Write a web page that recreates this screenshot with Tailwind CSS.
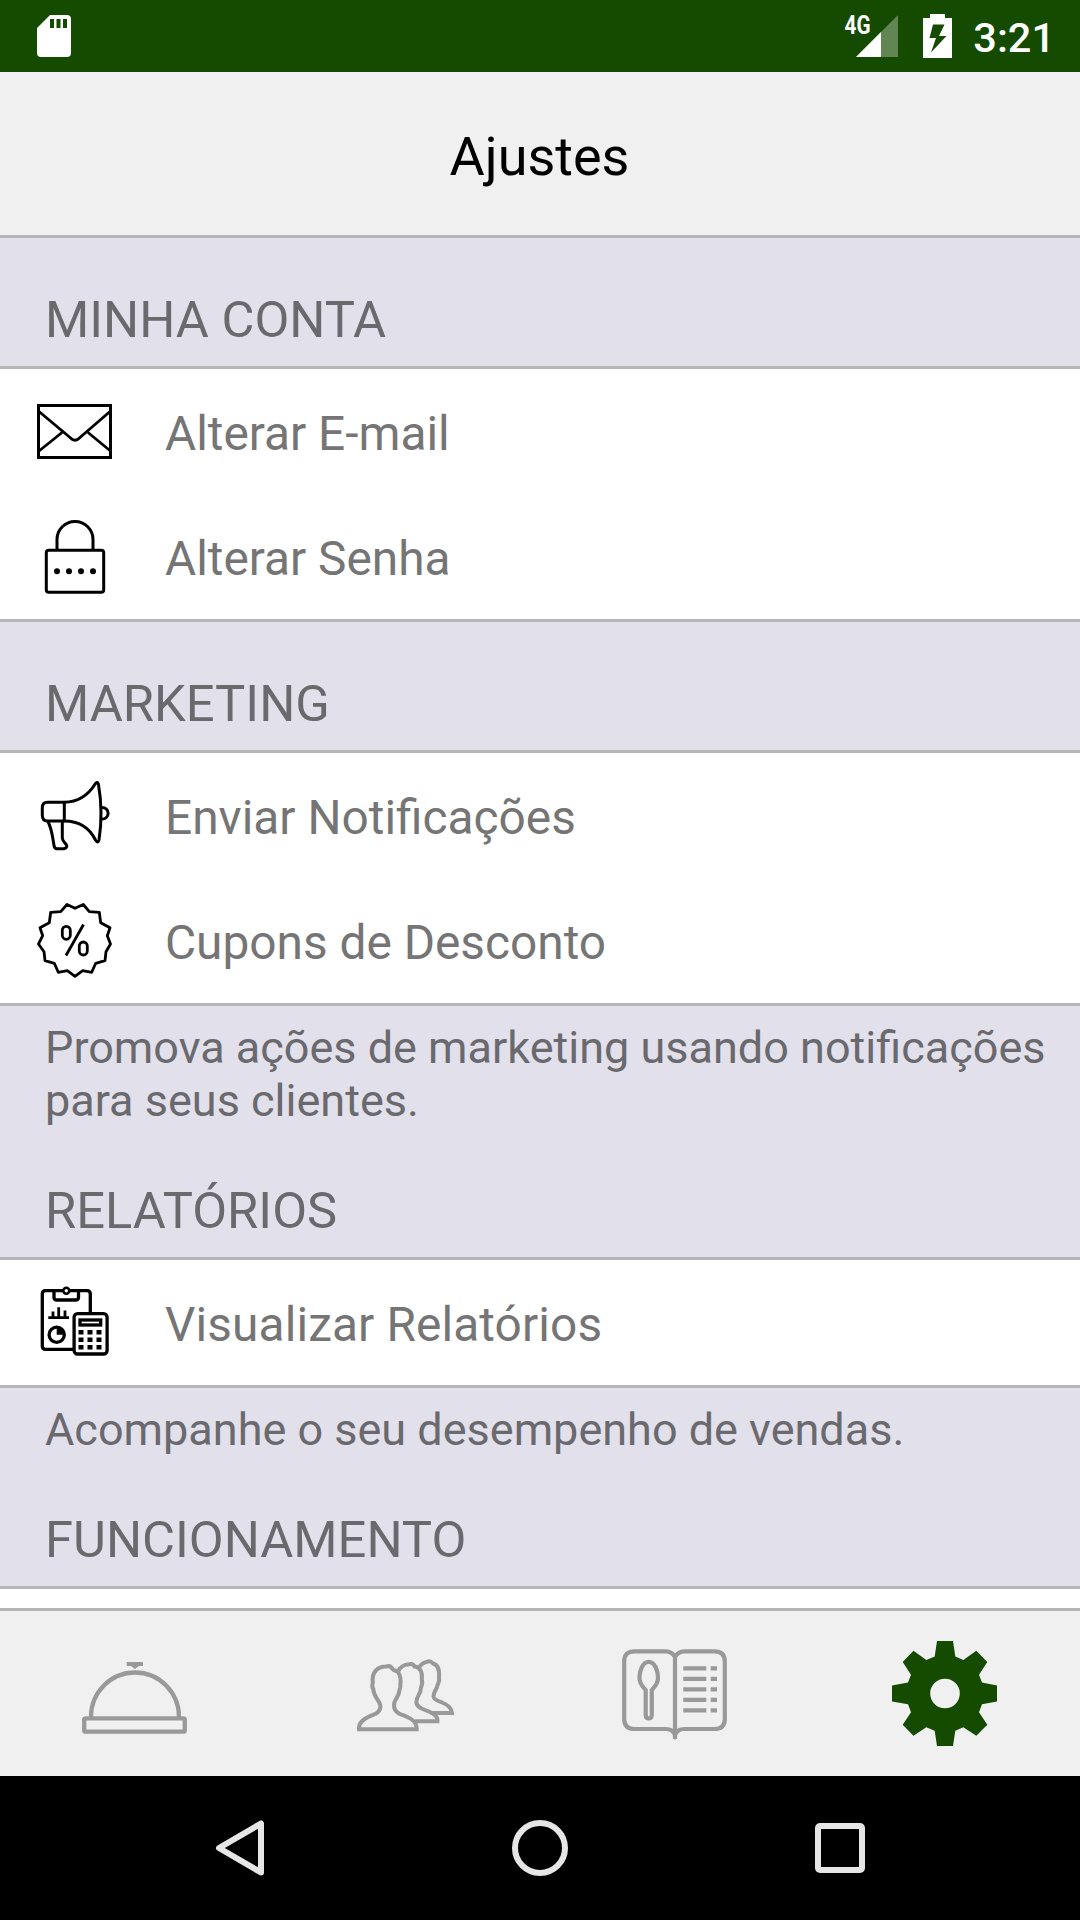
<!DOCTYPE html>
<html lang="pt-BR">
<head>
    <meta charset="UTF-8">
    <meta name="viewport" content="width=device-width, initial-scale=1.0">
    <title>Ajustes</title>
    <script src="https://cdn.jsdelivr.net/npm/@tailwindcss/browser@4"></script>
</head>
<body class="bg-black">
<div class="w-[1080px] h-[1920px] flex flex-col overflow-hidden bg-white font-['Roboto',sans-serif]">
    <!-- Status bar -->
    <div class="h-[72px] shrink-0 bg-[#144b00] flex items-center justify-between pl-[37px] pr-[25px] text-white">
        <svg class="w-[34px] h-[42px]" viewBox="0 0 34 42" fill="currentColor">
            <path fill-rule="evenodd" d="M13 0H30Q34 0 34 4V38Q34 42 30 42H4Q0 42 0 38V13ZM13 4V13H17V4ZM19.500 4V13H23.500V4ZM26 4V13H30V4Z"/>
        </svg>
        <div class="flex items-center">
            <svg class="w-[60px] h-[56px]" viewBox="-6 -6 60 56" fill="currentColor">
                <path d="M53 1V43H11Z" opacity=".33"/>
                <path d="M36 18V43H11Z"/>
                <text x="-0.500" y="19.500" font-family="Roboto" font-size="25" font-weight="700" textLength="26" lengthAdjust="spacingAndGlyphs">4G</text>
            </svg>
            <svg class="w-[29px] h-[44px] ml-[24px]" viewBox="0 0 29 44" fill="currentColor">
                <path fill-rule="evenodd" d="M7 0H22V4H29V44H0V4H7ZM10 10.500L6.500 24H13L8 38.500L23.500 22H16L21.500 10.500Z"/>
            </svg>
            <span class="text-[41.5px] leading-[50px] font-medium ml-[21px] pt-[4px]">3:21</span>
        </div>
    </div>

    <!-- Header -->
    <header class="h-[166px] shrink-0 bg-[#f0f0f0] border-b-3 border-[#b5b5b9] flex items-center justify-center">
        <h1 class="text-[54px] leading-[64px] pt-[6px] pr-[1px] text-black">Ajustes</h1>
    </header>

    <!-- Settings list -->
    <main class="flex-1 min-h-0 overflow-hidden text-[47.8px] text-[#757575]">
        <div class="bg-[#e2e0eb] border-b-3 border-[#b5b5b9]">
            <h2 class="text-[50.7px] leading-[60px] text-[#6a696e] pt-[52px] pb-[16px] pl-[45px]">MINHA CONTA</h2>
        </div>
        <ul>
            <li class="h-[125px] flex items-center pl-[37px] gap-[53px]">
                <svg class="w-[75px] h-[75px] text-black" viewBox="0 0 75 75" fill="none" stroke="currentColor" stroke-width="2.800">
                    <rect x="1.500" y="11.500" width="72" height="52" stroke-width="3"/>
                    <path d="M2 17.500L33 43.500Q38 49 43 43.500L73 17.500M2 57L25 38.500M51 38.500L73.500 57"/>
                </svg>
                <span class="pt-1.5">Alterar E-mail</span>
            </li>
            <li class="h-[125px] flex items-center pl-[37px] gap-[53px]">
                <svg class="w-[75px] h-[75px] text-black" viewBox="0 0 75 75" fill="none" stroke="currentColor" stroke-width="3">
                    <rect x="9.300" y="31.300" width="57.400" height="42" rx="2.500"/>
                    <path d="M20 31V20.500A18 18 0 0 1 56 20.500V31"/>
                    <g fill="currentColor" stroke="none">
                        <circle cx="20" cy="52.300" r="3"/>
                        <circle cx="32" cy="52.300" r="3"/>
                        <circle cx="44" cy="52.300" r="3"/>
                        <circle cx="56" cy="52.300" r="3"/>
                    </g>
                </svg>
                <span class="pt-1.5">Alterar Senha</span>
            </li>
        </ul>

        <div class="bg-[#e2e0eb] border-y-3 border-[#b5b5b9]">
            <h2 class="text-[50.7px] leading-[60px] text-[#6a696e] pt-[52px] pb-[16px] pl-[45px]">MARKETING</h2>
        </div>
        <ul>
            <li class="h-[125px] flex items-center pl-[37px] gap-[53px]">
                <svg class="w-[75px] h-[75px] text-black" viewBox="0 0 75 75" fill="none" stroke="currentColor" stroke-width="3" stroke-linejoin="round">
                    <path d="M27.300 24.300H10.500Q5.300 24.300 5.300 30V37Q5.300 43 10.500 43H27.300Z"/>
                    <path d="M27.300 24.300C43 24 52 16 58.500 5.500Q60.500 3 61.500 6.500C64.500 24 64.500 46 62 62Q61 66 58.500 62C53 51 43 43 27.300 43"/>
                    <path d="M64 29.500C73.500 28.500 73.500 42 64 41"/>
                    <path d="M10.700 43C15 51 15.500 59 17 67.500Q17.500 70.700 20 70.700H27Q31 69.500 29.300 66.500C27 64 25.500 63 25.300 60V43"/>
                </svg>
                <span class="pt-1.5">Enviar Notificações</span>
            </li>
            <li class="h-[125px] flex items-center pl-[37px] gap-[53px]">
                <svg class="w-[75px] h-[75px] text-black" viewBox="0 0 75 75" fill="none" stroke="currentColor" stroke-width="2.800" stroke-linejoin="round">
                    <path d="M30 1.500L38 5.300L46.300 1.500L52.300 8.700L62.300 9.300L63.700 19.700L73 24.700L70.300 32.700L73.500 41L69 48.700L68 57.700L58.700 60.300L54.700 69.300L45.700 67.700L38 73.300L30.300 67.700L21.300 69.300L17.300 60.300L8 57.700L7 48.700L1.500 41L5.700 32.700L3 24.700L12.300 19.700L13.700 9.300L23.700 8.700Z"/>
                    <rect x="25.300" y="23.300" width="8" height="13" rx="4"/>
                    <rect x="42.300" y="39" width="8" height="13" rx="4"/>
                    <path d="M46.500 21.500L29 52.500"/>
                </svg>
                <span class="pt-1.5">Cupons de Desconto</span>
            </li>
        </ul>

        <div class="bg-[#e2e0eb] border-y-3 border-[#b5b5b9]">
            <p class="text-[45px] leading-[53px] text-[#6a696e] pt-[15px] pb-[2px] pl-[45px] whitespace-nowrap">Promova ações de marketing usando notificações<br>para seus clientes.</p>
            <h2 class="text-[50.7px] leading-[60px] text-[#6a696e] pt-[52px] pb-[16px] pl-[45px]">RELATÓRIOS</h2>
        </div>
        <ul>
            <li class="h-[125px] flex items-center pl-[37px] gap-[53px]">
                <svg class="w-[75px] h-[75px] text-black" viewBox="0 0 75 75" fill="none" stroke="currentColor" stroke-width="3.300">
                    <path d="M53.300 28V9Q53.300 5.700 50 5.700H8.500Q5.300 5.700 5.300 9V61Q5.300 64.300 8.500 64.300H37"/>
                    <path d="M17 6V12.500Q17 15 20 15H38.500Q41.500 15 41.500 12.500V6"/>
                    <circle cx="29.300" cy="5.700" r="3" fill="white" stroke-width="2.600"/>
                    <path d="M11.300 32.700H32M16 32V26.500M21.700 32V22.300M28 32V25.500" stroke-width="2.800"/>
                    <circle cx="19.700" cy="49.700" r="7.600"/>
                    <path d="M19.700 49.700V42A7.700 7.700 0 0 1 27.400 49.700Z" fill="currentColor" stroke="none"/>
                    <rect x="37.100" y="28.700" width="33" height="40.300" rx="3.500" fill="white"/>
                    <rect x="43" y="35" width="20.700" height="5"/>
                    <path d="M41.500 47.300H46.500M50.500 47.300H55.500M59.500 47.300H64.500M41.500 54.800H46.500M50.500 54.800H55.500M59.500 54.800H64.500M41.500 62.300H46.500M50.500 62.300H55.500M59.500 62.300H64.500" stroke-width="4.600"/>
                </svg>
                <span class="pt-1.5 tracking-[0.12px]">Visualizar Relatórios</span>
            </li>
        </ul>

        <div class="bg-[#e2e0eb] border-y-3 border-[#b5b5b9]">
            <p class="text-[45px] leading-[53px] text-[#6a696e] pt-[15px] pb-[2px] pl-[45px] whitespace-nowrap">Acompanhe o seu desempenho de vendas.</p>
            <h2 class="text-[50.7px] leading-[60px] text-[#6a696e] pt-[52px] pb-[16px] pl-[45px]">FUNCIONAMENTO</h2>
        </div>
    </main>

    <!-- Tab bar -->
    <nav class="h-[168px] shrink-0 grid grid-cols-[270px_270px_270px_270px] -ml-px place-items-center bg-[#f0f0f0] border-t-3 border-[#b5b5b5] text-[#999999]">
        <svg class="w-[105px] h-[105px]" viewBox="0 0 105 105" fill="none" stroke="currentColor" stroke-width="4.300">
            <rect x="2.200" y="77.300" width="100.600" height="13.400" rx="1.500"/>
            <path d="M9 76A44 44.500 0 0 1 97 76"/>
            <path d="M44.700 21H61V25H57L53 28L49 25H44.700Z" fill="currentColor" stroke="none"/>
        </svg>
        <svg class="w-[105px] h-[105px]" viewBox="0 0 105 105" fill="none" stroke="currentColor" stroke-width="4">
            <path d="M7 88.300C6 80 15 76 22 73.500C28 71 30 66 27 61C24 56 21.500 54 21.300 48C19.500 46 20.500 44 20.800 41C19.500 32 25 25.500 34 25.500C37 24.500 39 25 40.500 28C42 30 44 29 46.300 31.500C49 36 49 40 48.300 44C49 46 48 48 47.500 49C47 55 44.500 56.500 42.500 61C41 67 43 71 49 73.500C56 76 65 79 64.700 88.300Z"/>
            <path d="M46.300 30C48.500 26 52 23.500 56.500 23.500C59 22.500 61 22.500 62.500 25.500C68 26 70.500 31 69.800 39C71 42 70 44 69 46.500C69 53 64.500 55 64.500 60.500C64 65 68 67 73 69C79 71.500 86 73.500 85.500 80.300H62.500"/>
            <path d="M66.500 27C69 23.500 71 21.500 74.500 21C77 19.500 79 20 81 22.500C87 24 87.500 31 87 36.500C88 40 86.500 42 85.500 44C85 49 81 51 81.500 55.500C82 59 86 60 90 61.500C95 63.500 99.500 66 100 72H78"/>
        </svg>
        <svg class="w-[105px] h-[105px]" viewBox="0 0 105 105" fill="none" stroke="currentColor" stroke-width="4.200">
            <path d="M53 16Q50 10.300 43.500 10.300H12.500Q2.200 10.300 2.200 20.500V78Q2.200 88 12.500 88H44Q50.500 88 53 94Q55.500 88 62 88H92.500Q102.800 88 102.800 78V20.500Q102.800 10.300 92.500 10.300H62.500Q56 10.300 53 16V98"/>
            <path d="M26.700 20.800C20.500 20.800 17.500 30 17.500 37C17.500 43 20.500 45.500 23.700 49V74Q24 77.500 26.700 77.500Q29.500 77.500 29.800 74V49C33 45.500 36 43 36 37C36 30 33 20.800 26.700 20.800Z"/>
            <path d="M61.300 27.300H84.300M88.700 27.300H95M61.300 37.800H84.300M88.700 37.800H95M61.300 48.300H84.300M88.700 48.300H95M61.300 58.800H84.300M88.700 58.800H95M61.300 69.300H84.300M88.700 69.300H95"/>
        </svg>
        <svg class="w-[105px] h-[105px] text-[#144b00]" viewBox="0 0 105 105" fill="currentColor">
            <path fill-rule="evenodd" d="M45 0H61L63.300 15.500L71.300 19L84.300 9.700L95.300 21L87 33.700L90 41.500L105 44.500V60.500L90 63.300L87 71.300L95.300 83.700L84.300 94.700L71.300 86.300L63.300 89.700L61 105H45L42.700 89.700L34.300 86.300L21.500 94.700L10.700 83.700L19 71.300L16 63.300L0 60.500V44.500L16 41.500L19 33.700L10.700 21L21.500 9.700L34.300 19L42.700 15.500ZM53 37.700A14.800 14.800 0 1 0 53 67.300A14.800 14.800 0 1 0 53 37.700Z"/>
        </svg>
    </nav>

    <!-- Android navigation -->
    <div class="h-[144px] shrink-0 bg-black text-[#e6e6e6] flex justify-center">
        <div class="w-[300px] flex items-center justify-center">
            <svg class="w-[56px] h-[56px]" viewBox="0 0 56 56" fill="none" stroke="currentColor" stroke-width="6" stroke-linejoin="round">
                <path d="M49 3.500V52.500L7 28Z"/>
            </svg>
        </div>
        <div class="w-[300px] flex items-center justify-center">
            <div class="w-[56px] h-[56px] rounded-full border-6 border-[#e6e6e6]"></div>
        </div>
        <div class="w-[300px] flex items-center justify-center">
            <div class="w-[50px] h-[50px] rounded-[5px] border-6 border-[#e6e6e6]"></div>
        </div>
    </div>
</div>
</body>
</html>
